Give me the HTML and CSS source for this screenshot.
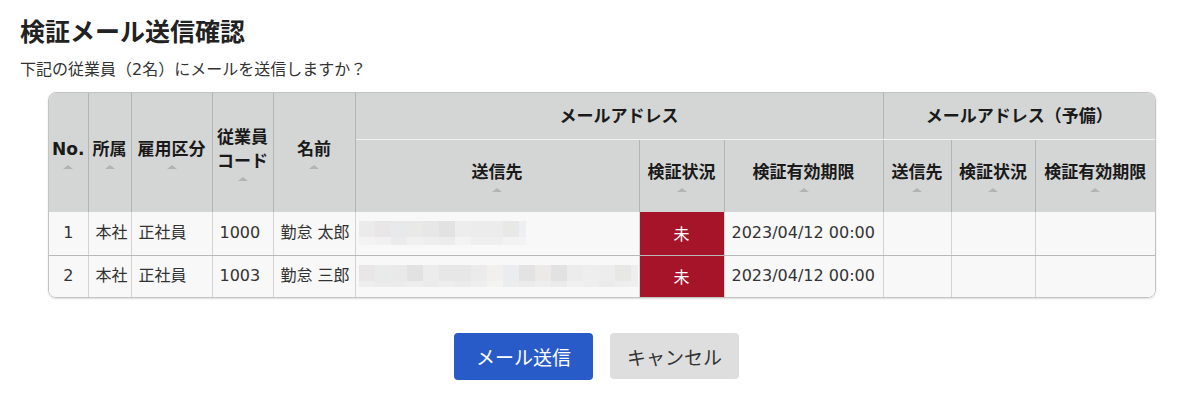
FILE: index.html
```html
<!DOCTYPE html>
<html lang="ja">
<head>
<meta charset="utf-8">
<title>検証メール送信確認</title>
<link rel="stylesheet" href="styles.css">
</head>
<body>
<div class="page">
  <h1 class="title">検証メール送信確認</h1>
  <p class="lead">下記の従業員（2名）にメールを送信しますか？</p>

  <div class="table-wrap">
    <table class="grid">
      <colgroup>
        <col class="c-no"><col class="c-dept"><col class="c-type"><col class="c-code"><col class="c-name">
        <col class="c-to"><col class="c-status"><col class="c-expire">
        <col class="c-to2"><col class="c-status2"><col class="c-expire2">
      </colgroup>
      <thead>
        <tr class="h1row">
          <th rowspan="2"><span class="th-label">No.</span><i class="sort"></i></th>
          <th rowspan="2"><span class="th-label">所属</span><i class="sort"></i></th>
          <th rowspan="2"><span class="th-label">雇用区分</span><i class="sort"></i></th>
          <th rowspan="2"><span class="th-label">従業員<br>コード</span><i class="sort"></i></th>
          <th rowspan="2"><span class="th-label">名前</span><i class="sort"></i></th>
          <th colspan="3" class="group">メールアドレス</th>
          <th colspan="3" class="group end">メールアドレス（予備）</th>
        </tr>
        <tr class="h2row">
          <th><span class="th-label">送信先</span><i class="sort"></i></th>
          <th><span class="th-label">検証状況</span><i class="sort"></i></th>
          <th><span class="th-label">検証有効期限</span><i class="sort"></i></th>
          <th><span class="th-label">送信先</span><i class="sort"></i></th>
          <th><span class="th-label">検証状況</span><i class="sort"></i></th>
          <th class="end"><span class="th-label">検証有効期限</span><i class="sort"></i></th>
        </tr>
      </thead>
      <tbody>
        <tr>
          <td class="num">1</td>
          <td>本社</td>
          <td>正社員</td>
          <td>1000</td>
          <td>勤怠 太郎</td>
          <td class="mail"><span class="mosaic mosaic-a"></span></td>
          <td class="status-no">未</td>
          <td>2023/04/12 00:00</td>
          <td></td>
          <td></td>
          <td class="end"></td>
        </tr>
        <tr>
          <td class="num">2</td>
          <td>本社</td>
          <td>正社員</td>
          <td>1003</td>
          <td>勤怠 三郎</td>
          <td class="mail"><span class="mosaic mosaic-b"></span></td>
          <td class="status-no">未</td>
          <td>2023/04/12 00:00</td>
          <td></td>
          <td></td>
          <td class="end"></td>
        </tr>
      </tbody>
    </table>
  </div>

  <div class="actions">
    <button class="btn btn-primary" type="button">メール送信</button>
    <button class="btn btn-cancel" type="button">キャンセル</button>
  </div>
</div>
</body>
</html>
```

FILE: styles.css
```css
html, body {
  margin: 0;
  background: #ffffff;
}

body {
  font-family: "DejaVu Sans", "Noto Sans CJK JP", sans-serif;
  color: #333333;
}

.page {
  padding: 14px 20px 0;
}

.title {
  margin: 0;
  font-family: "Noto Sans CJK JP", sans-serif;
  font-size: 25px;
  line-height: 32px;
  font-weight: bold;
  color: #222222;
}

.lead {
  margin: 12px 0 0;
  font-size: 16px;
  line-height: 24px;
  color: #333333;
}

.table-wrap {
  margin: 10px 0 0 28px;
  width: 1108px;
  box-sizing: border-box;
  border: 1px solid #c4c4c4;
  border-radius: 8px;
  overflow: hidden;
  box-shadow: 0 1px 2px rgba(0, 0, 0, 0.14);
}

.grid {
  width: 100%;
  border-collapse: collapse;
  table-layout: fixed;
}

.c-no { width: 39px; }
.c-dept { width: 43px; }
.c-type { width: 81px; }
.c-code { width: 61px; }
.c-name { width: 82px; }
.c-to { width: 284px; }
.c-status { width: 85px; }
.c-expire { width: 159px; }
.c-to2 { width: 68px; }
.c-status2 { width: 84px; }
.c-expire2 { width: 120px; }

.grid th {
  background: #d4d6d6;
  color: #1a1a1a;
  font-size: 17px;
  font-weight: bold;
  line-height: 24px;
  padding: 0 1px;
  text-align: center;
  vertical-align: middle;
  white-space: nowrap;
  border-right: 1px solid #b3b5b5;
}

.grid th.end {
  border-right: none;
}

.th-label {
  display: block;
}

.sort {
  display: block;
  width: 0;
  height: 0;
  margin: 4px auto 0;
  border-left: 5px solid transparent;
  border-right: 5px solid transparent;
  border-bottom: 4px solid #b2b4b4;
}

.h1row {
  height: 46px;
}

.grid th.group {
  border-bottom: 1px solid #f0f2f2;
}

.h2row {
  height: 73px;
}

.grid tbody tr {
  height: 43px;
}

.grid tbody tr:last-child {
  height: 42px;
}

.grid td {
  background: #f8f8f8;
  font-size: 16px;
  line-height: 22px;
  padding: 0 7px;
  white-space: nowrap;
  vertical-align: middle;
  color: #333333;
  border-right: 1px solid #d3d3d3;
  border-bottom: 1px solid #b9b9b9;
}

.grid tbody tr:last-child td {
  border-bottom: none;
}

.grid td.end {
  border-right: none;
}

.grid td.num {
  text-align: center;
  padding: 0;
}

.grid td.mail {
  padding: 0 0 0 3px;
  line-height: 0;
}

.grid td.status-no {
  background: #a51429;
  color: #ffffff;
  text-align: center;
  font-family: "Noto Sans CJK JP", sans-serif;
}

.mosaic {
  display: inline-block;
  vertical-align: middle;
}

.mosaic-a {
  width: 167px;
  height: 24px;
  background:
    linear-gradient(90deg,
      #ebebeb 0 16px, #e8e6e6 16px 32px, #e8e9eb 32px 48px, #e9e9e7 48px 64px,
      #e7e7e7 64px 80px, #e2e2e2 80px 96px, #ededed 96px 112px, #ececec 112px 128px,
      #ececec 128px 144px, #e8e8e6 144px 160px, #eeeff2 160px 167px) top left / 167px 16px no-repeat,
    linear-gradient(90deg,
      #f3f3f3 0 16px, #f1f1f1 16px 32px, #ebebeb 32px 48px, #f0f0f0 48px 64px,
      #eeeeee 64px 80px, #ebeceb 80px 96px, #f3f3f3 96px 112px, #efefef 112px 128px,
      #efefef 128px 144px, #f2f2f2 144px 160px, #f3f3f5 160px 167px) bottom left / 167px 8px no-repeat;
}

.mosaic-b {
  width: 279px;
  height: 22px;
  background:
    linear-gradient(90deg,
      #e8e6e6 0 16px, #e9eaea 16px 32px, #e9e9e9 32px 48px, #e3e2e3 48px 64px,
      #ececec 64px 80px, #e7e7e7 80px 96px, #e7e7e7 96px 112px, #ebebeb 112px 128px,
      #f1f0ee 128px 144px, #ebecef 144px 160px, #e3e3e3 160px 176px, #ebeae8 176px 192px,
      #e2e2e2 192px 208px, #ececec 208px 224px, #eeeeee 224px 240px, #ededed 240px 256px,
      #e7e7e5 256px 272px, #eeeeee 272px 279px) top left / 279px 16px no-repeat,
    linear-gradient(90deg,
      #eeeeee 0 16px, #ebebeb 16px 32px, #ebebeb 32px 48px, #eeeeee 48px 64px,
      #ebebeb 64px 80px, #eeeeee 80px 96px, #ebebeb 96px 112px, #eeeeee 112px 128px,
      #f3f3f1 128px 144px, #eceeee 144px 160px, #ebebeb 160px 176px, #eeeeee 176px 192px,
      #ebebeb 192px 208px, #f0f0f0 208px 224px, #eeeeee 224px 240px, #ebebeb 240px 256px,
      #eeeeee 256px 272px, #efefef 272px 279px) bottom left / 279px 6px no-repeat;
}

.actions {
  display: flex;
  justify-content: center;
  gap: 17px;
  margin-top: 35px;
  padding-right: 9px;
}

.btn {
  border: none;
  border-radius: 4px;
  font-family: "Noto Sans CJK JP", sans-serif;
  font-size: 19px;
  padding: 0;
  cursor: pointer;
}

.btn-primary {
  width: 139px;
  height: 47px;
  background: #295bc8;
  color: #ffffff;
}

.btn-cancel {
  width: 129px;
  height: 46px;
  background: #dedede;
  color: #333333;
}
```
